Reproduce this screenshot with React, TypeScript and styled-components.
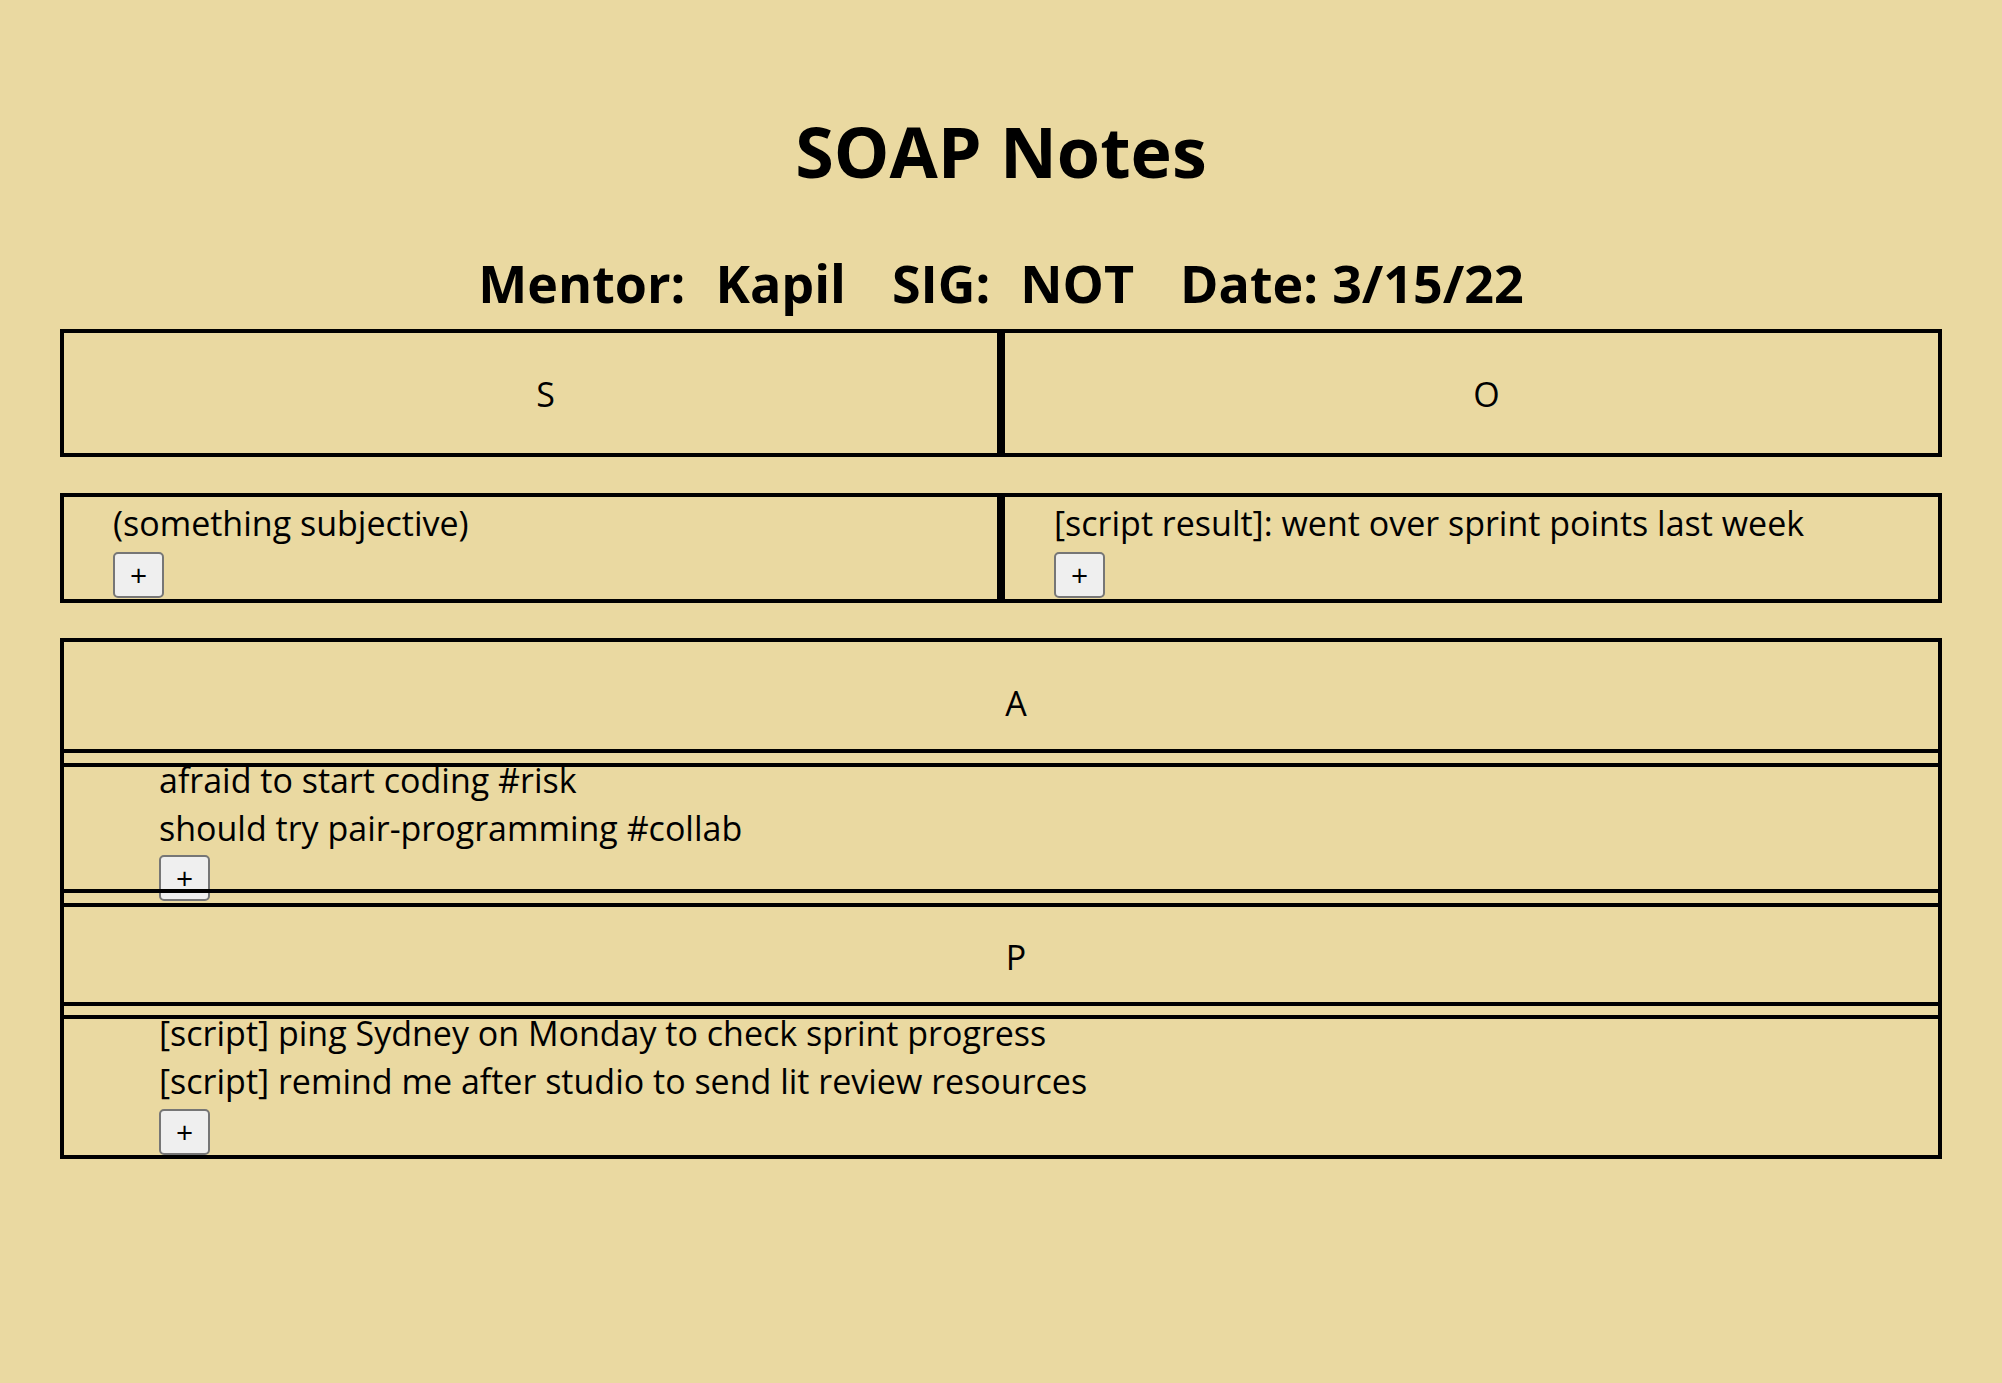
import styled, { createGlobalStyle } from "styled-components";

const GlobalStyle = createGlobalStyle`
    body {
        margin: 0;
        background-color: #ead9a1;
        color: #000;
        font-family: "Open Sans", "Noto Sans", sans-serif;
    }
`;

const Page = styled.div`
    padding: 109px 60px 120px;
`;

const Title = styled.h1`
    margin: 0;
    font-size: 70px;
    line-height: 84px;
    font-weight: 700;
    text-align: center;
`;

const MetaLine = styled.h2`
    margin: 58px 0 0;
    display: flex;
    justify-content: center;
    gap: 46px;
    font-size: 52px;
    line-height: 64px;
    font-weight: 700;
`;

const Field = styled.span<{ $gap: number }>`
    display: flex;
    gap: ${(p) => p.$gap}px;
`;

const Pair = styled.div<{ $height: number; $mt: number }>`
    display: grid;
    grid-template-columns: 1fr 1fr;
    height: ${(p) => p.$height}px;
    margin-top: ${(p) => p.$mt}px;
`;

const HeadCell = styled.div`
    box-sizing: border-box;
    border: 4px solid #000;
    padding: 2px 0 0 30px;
    display: flex;
    align-items: center;
    justify-content: center;
    font-size: 34px;
    line-height: 48px;
`;

const NoteCell = styled.div`
    box-sizing: border-box;
    border: 4px solid #000;
    padding: 2px 0 0 49px;
    font-size: 34px;
    line-height: 48px;
`;

const Section = styled.div`
    margin-top: 35px;
    border: 4px solid #000;
    display: flex;
    flex-direction: column;
`;

const SectionHead = styled.div<{ $height: number; $pt: number; $top?: boolean }>`
    height: ${(p) => p.$height}px;
    box-sizing: content-box;
    padding: ${(p) => p.$pt}px 0 0 30px;
    margin-top: ${(p) => (p.$top ? 10 : 0)}px;
    border-top: ${(p) => (p.$top ? "4px solid #000" : "none")};
    border-bottom: 4px solid #000;
    text-align: center;
    font-size: 34px;
    line-height: 48px;
`;

const SectionBody = styled.div<{ $height?: number; $mt: number; $closed?: boolean }>`
    position: relative;
    margin-top: ${(p) => p.$mt}px;
    border-top: 4px solid #000;
    border-bottom: ${(p) => (p.$closed ? "4px solid transparent" : "none")};
    height: ${(p) => (p.$height ? `${p.$height}px` : "auto")};
    padding-left: 95px;
    font-size: 34px;
    line-height: 48px;

    &::after {
        content: "";
        display: ${(p) => (p.$closed ? "block" : "none")};
        position: absolute;
        left: 0;
        right: 0;
        bottom: -4px;
        height: 4px;
        background: #000;
    }
`;

const NoteList = styled.div<{ $offset: number }>`
    margin-top: ${(p) => p.$offset}px;
`;

const NoteLine = styled.div`
    white-space: nowrap;
`;

const AddButton = styled.button<{ $mt: number }>`
    display: flex;
    align-items: center;
    justify-content: center;
    box-sizing: border-box;
    width: 51px;
    height: 46px;
    margin-top: ${(p) => p.$mt}px;
    padding: 0;
    background-color: #efefef;
    border: 2px solid #767676;
    border-radius: 5px;
    color: #000;
    font-family: "Open Sans", "Noto Sans", sans-serif;
    font-size: 30px;
    line-height: 1;
    cursor: pointer;
`;

const assessment = ["afraid to start coding #risk", "should try pair-programming #collab"];
const plan = [
    "[script] ping Sydney on Monday to check sprint progress",
    "[script] remind me after studio to send lit review resources",
];

export default function App() {
    return (
        <>
            <GlobalStyle />
            <Page>
                <Title>SOAP Notes</Title>
                <MetaLine>
                    <Field $gap={30}>
                        <span>Mentor:</span>
                        <span>Kapil</span>
                    </Field>
                    <Field $gap={30}>
                        <span>SIG:</span>
                        <span>NOT</span>
                    </Field>
                    <Field $gap={14}>
                        <span>Date:</span>
                        <span>3/15/22</span>
                    </Field>
                </MetaLine>

                <Pair $height={128} $mt={14}>
                    <HeadCell>S</HeadCell>
                    <HeadCell>O</HeadCell>
                </Pair>

                <Pair $height={110} $mt={36}>
                    <NoteCell>
                        <NoteLine>(something subjective)</NoteLine>
                        <AddButton $mt={5}>+</AddButton>
                    </NoteCell>
                    <NoteCell>
                        <NoteLine>[script result]: went over sprint points last week</NoteLine>
                        <AddButton $mt={5}>+</AddButton>
                    </NoteCell>
                </Pair>

                <Section>
                    <SectionHead $height={70} $pt={37}>A</SectionHead>
                    <SectionBody $height={122} $mt={10} $closed>
                        <NoteList $offset={-11}>
                            {assessment.map((line) => (
                                <NoteLine key={line}>{line}</NoteLine>
                            ))}
                        </NoteList>
                        <AddButton $mt={3}>+</AddButton>
                    </SectionBody>
                    <SectionHead $height={69} $pt={26} $top>P</SectionHead>
                    <SectionBody $mt={9}>
                        <NoteList $offset={-10}>
                            {plan.map((line) => (
                                <NoteLine key={line}>{line}</NoteLine>
                            ))}
                        </NoteList>
                        <AddButton $mt={4}>+</AddButton>
                    </SectionBody>
                </Section>
            </Page>
        </>
    );
}
